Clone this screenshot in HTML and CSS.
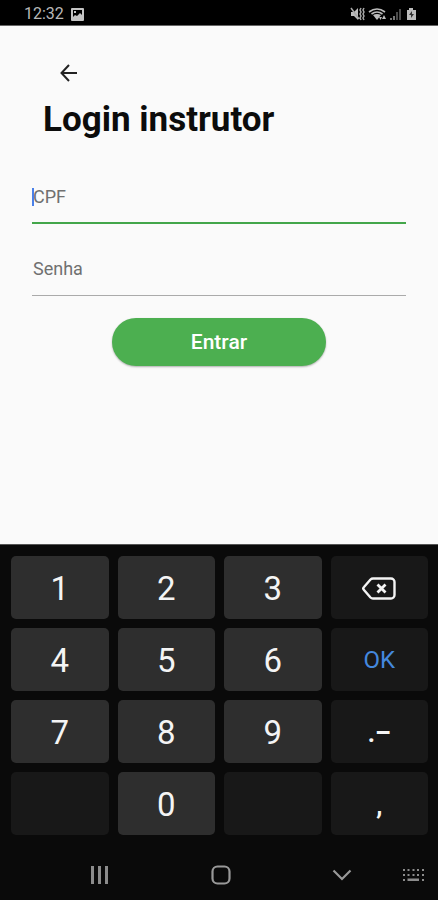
FILE: index.html
```html
<!DOCTYPE html>
<html lang="pt-BR">
<head>
<meta charset="utf-8">
<meta name="viewport" content="width=device-width, initial-scale=1">
<title>Login instrutor</title>
<link rel="stylesheet" href="styles.css">
</head>
<body>
<header class="status">
  <span class="clock">12:32</span>
  <svg class="status-photo" width="13" height="13" viewBox="0 0 13 13"><path fill="#c4c4c4" fill-rule="evenodd" d="M1 0h11a1 1 0 0 1 1 1v11a1 1 0 0 1-1 1H1a1 1 0 0 1-1-1V1a1 1 0 0 1 1-1zM2 2v7l2-2 2 1 3-3 2 2V2zM3 3h2v2H3z"/></svg>
  <svg class="status-icons" width="68" height="15" viewBox="0 0 68 15">
    <path fill="#bdbdbd" d="M1 5h3l4-4v12l-4-4H1z"/>
    <path fill="none" stroke="#a8a8a8" stroke-width="1.500" d="M1 1l8 11M11 1l-1 2 1 2-1 2 1 2-1 2 1 2M14 1l-1 2 1 2-1 2 1 2-1 2 1 2"/>
    <path fill="none" stroke="#bdbdbd" stroke-width="1.600" d="M19 5q8-6 16 0M21.500 7q5.500-4 11 0"/>
    <path fill="#bdbdbd" d="M23 8q4-2 8 0l-4 5z"/>
    <path fill="#bdbdbd" d="M29 10h3l-1.500 3zM32 12h4l-2-4z"/>
    <path fill="#777" d="M40 11h2v2h-2zM43 9h2v4h-2z"/>
    <path fill="#4b4b4b" d="M46 5h2v8h-2zM49 2h2v11h-2z"/>
    <path fill="#bdbdbd" d="M59 1h4v2h3v10h-9V3h2z"/>
    <path fill="#333" d="M62 4l-3 4h2v3l3-4h-2z"/>
  </svg>
</header>

<main class="screen">
  <button class="back" type="button" aria-label="Voltar">
    <svg width="18" height="18" viewBox="0 0 18 18" fill="none" stroke="#222" stroke-width="2"><path d="M17 9H2M9 1L1.500 9 9 17"/></svg>
  </button>
  <h1 class="title">Login instrutor</h1>
  <form class="form">
    <div class="field field-active">
      <label for="cpf">CPF</label>
      <input id="cpf" type="text" inputmode="numeric">
      <span class="caret"></span>
    </div>
    <div class="field">
      <label for="senha">Senha</label>
      <input id="senha" type="password">
    </div>
    <button class="submit" type="button">Entrar</button>
  </form>
</main>

<section class="keyboard" aria-label="Teclado">
  <button class="key" type="button">1</button>
  <button class="key" type="button">2</button>
  <button class="key" type="button">3</button>
  <button class="key key-dark" type="button" aria-label="Apagar">
    <svg width="34" height="23" viewBox="0 0 34 23" fill="none" stroke="#f4f4f4" stroke-width="2.400" stroke-linejoin="round"><path d="M11 1.500h18a3.500 3.500 0 0 1 3.500 3.500v13a3.500 3.500 0 0 1-3.500 3.500H11q-1.500 0-2.500-1L2 13q-1.500-1.500 0-3l6.500-7.500q1-1 2.500-1z"/><path stroke-width="2.800" d="M15.500 7.500l8 8M23.500 7.500l-8 8"/></svg>
  </button>
  <button class="key" type="button">4</button>
  <button class="key" type="button">5</button>
  <button class="key" type="button">6</button>
  <button class="key key-dark key-ok" type="button">OK</button>
  <button class="key" type="button">7</button>
  <button class="key" type="button">8</button>
  <button class="key" type="button">9</button>
  <button class="key key-dark key-mark" type="button">.–</button>
  <span class="key key-dark"></span>
  <button class="key" type="button">0</button>
  <span class="key key-dark"></span>
  <button class="key key-dark key-mark" type="button">,</button>
</section>

<nav class="navbar" aria-label="Sistema">
  <button type="button" aria-label="Recentes"><svg width="18" height="20" viewBox="0 0 18 20" fill="#8c8c8c"><path d="M0 1h3v18H0zM7 1h3v18H7zM14 1h3v18h-3z"/></svg></button>
  <button type="button" aria-label="Início"><svg width="20" height="20" viewBox="0 0 20 20" fill="none" stroke="#999" stroke-width="2.200"><rect x="1.500" y="1.500" width="17" height="17" rx="5"/></svg></button>
  <button type="button" aria-label="Ocultar teclado"><svg width="20" height="20" viewBox="0 0 20 20" fill="none" stroke="#999" stroke-width="2.200"><path d="M1.500 5.500L10 14l8.500-8.500"/></svg></button>
  <button class="switcher" type="button" aria-label="Trocar teclado"><svg width="23" height="14" viewBox="0 0 23 14" fill="#8c8c8c"><path d="M1 1h2v2H1zM5.500 1h2v2h-2zM10.500 1h2v2h-2zM15 1h2v2h-2zM20 1h2v2h-2zM1 6h2v2H1zM5.500 6h2v2h-2zM10.500 6h2v2h-2zM15 6h2v2h-2zM20 6h2v2h-2zM1 11h2v2H1zM5.500 10.500h11.500V13H5.500zM20 11h2v2h-2z"/></svg></button>
</nav>
</body>
</html>
```
FILE: styles.css
```css
* {
  box-sizing: border-box;
}

body {
  margin: 0;
  min-height: 100vh;
  display: flex;
  flex-direction: column;
  background: #fafafa;
  font-family: Roboto, "Liberation Sans", sans-serif;
}

button {
  border: 0;
  padding: 0;
  background: none;
  font-family: inherit;
}

svg {
  display: block;
}

.status {
  display: flex;
  align-items: center;
  height: 26px;
  padding: 3px 20px 0 24px;
  background: #000;
  border-bottom: 1px solid #666;
}

.clock {
  color: #b8b8b8;
  font-size: 16px;
  line-height: 22px;
}

.status-photo {
  margin-left: 7px;
}

.status-icons {
  margin-left: auto;
}

.screen {
  flex: 1;
  padding: 35px 32px 0;
}

.back {
  display: flex;
  align-items: center;
  justify-content: center;
  width: 24px;
  height: 24px;
  margin-left: 25px;
}

.title {
  margin: 15px 0 0 11px;
  color: #0c0c0c;
  font-size: 35px;
  font-weight: 700;
  line-height: 40px;
}

.form {
  display: flex;
  flex-direction: column;
  align-items: center;
  margin-top: 32px;
}

.field {
  display: grid;
  width: 100%;
  height: 52px;
  margin-bottom: 20px;
  border-bottom: 1px solid #aaa;
}

.field-active {
  border-bottom: 2px solid #43a64a;
}

.field > * {
  grid-area: 1 / 1;
}

.field label {
  padding: 11px 0 0 1px;
  color: #707070;
  font-size: 18px;
  line-height: 28px;
}

.field input {
  width: 100%;
  border: 0;
  padding: 0;
  outline: 0;
  background: transparent;
  color: #222;
  font: inherit;
  font-size: 18px;
}

.caret {
  width: 2px;
  height: 18px;
  margin-top: 16px;
  background: #4a80e8;
}

.submit {
  width: 57%;
  height: 48px;
  margin-top: 2px;
  border-radius: 24px;
  background: #4caf50;
  box-shadow: 0 1px 2px rgba(0, 0, 0, 0.3);
  color: #fff;
  font-size: 21px;
  font-weight: 500;
}

.keyboard {
  display: grid;
  grid-template-columns: repeat(4, 1fr);
  grid-auto-rows: 63px;
  gap: 9px;
  padding: 11px 10px 0 11px;
  border-top: 1px solid #555;
  background: #0a0a0a;
}

.key {
  display: flex;
  align-items: center;
  justify-content: center;
  border-radius: 5px;
  background: #2e2e2e;
  color: #f4f4f4;
  font-size: 33px;
  padding-top: 1px;
}

.key-dark {
  background: #181818;
}

.key-ok {
  color: #4488de;
  font-size: 24px;
}

.key-mark {
  padding-top: 3px;
  font-size: 25px;
  font-weight: 700;
}

.navbar {
  display: grid;
  grid-template-columns: 11fr 11fr 11fr 3fr;
  align-items: center;
  height: 65px;
  padding: 14px 0 0 39px;
  background: #0a0a0a;
}

.navbar button {
  display: flex;
  align-items: center;
  justify-content: center;
  height: 40px;
}

.navbar .switcher {
  justify-self: end;
  padding-right: 13px;
}
```
